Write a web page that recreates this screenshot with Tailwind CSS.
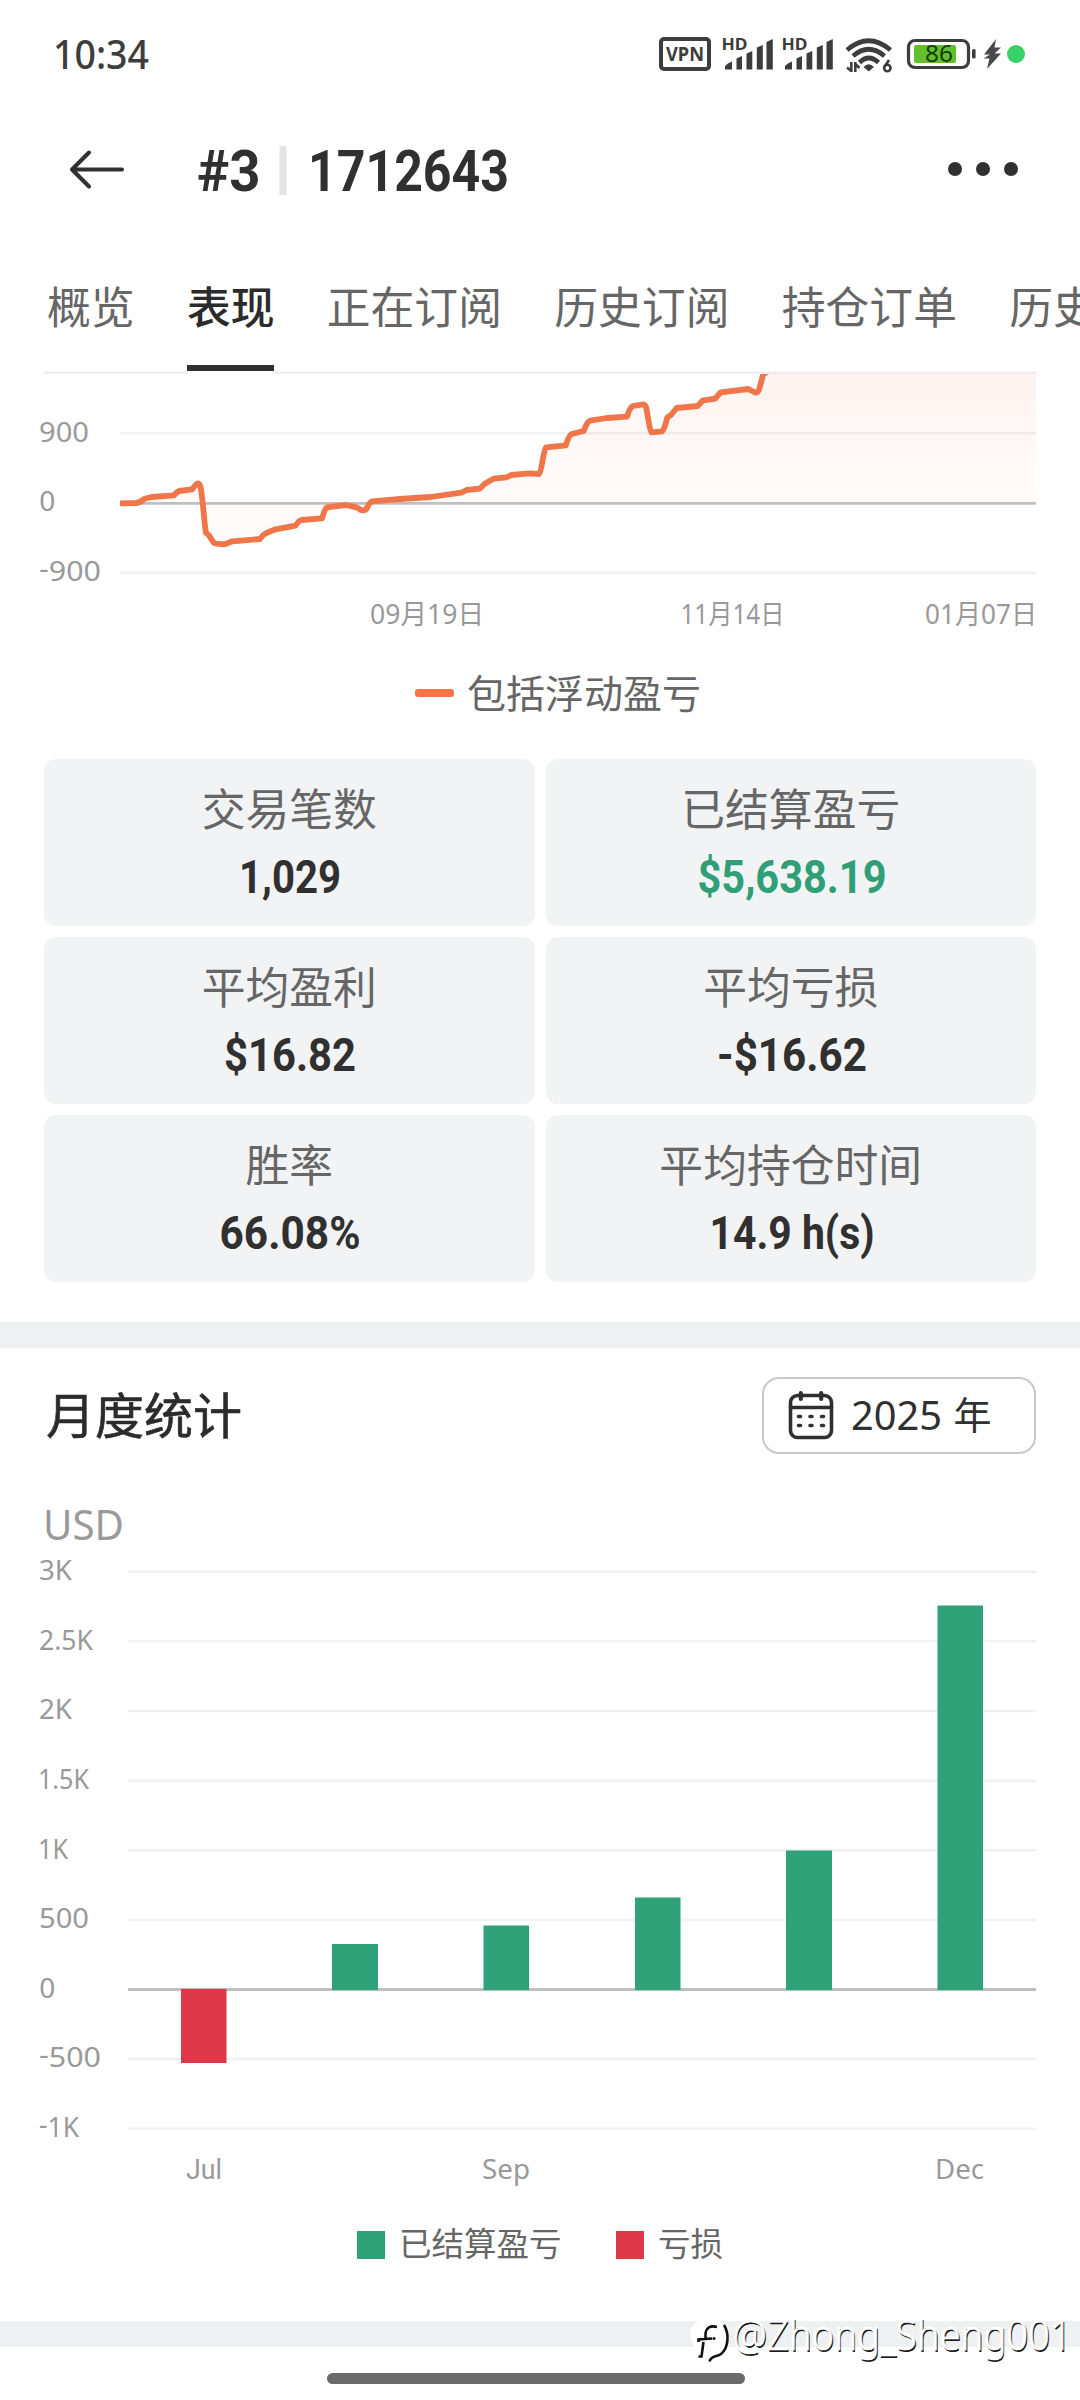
<!DOCTYPE html>
<html lang="zh-CN">
<head>
<meta charset="utf-8">
<title>#3 | 1712643</title>
<script src="https://cdn.jsdelivr.net/npm/@tailwindcss/browser@4"></script>
</head>
<body class="bg-white">
<div class="relative flex h-[2400px] w-[1080px] flex-col overflow-hidden bg-white font-['Noto_Sans','Noto_Sans_CJK_SC',sans-serif] text-[#2f2f2f] [&_svg]:overflow-visible">

  <!-- Status bar -->
  <header class="flex h-[108px] shrink-0 items-center justify-between pr-[55px] pl-[53px]">
    <svg class="h-[60px] w-[100px]" viewBox="0 -10 100 60"><text x="0" y="34.5" font-size="40" font-weight="500" fill="#3d3d3d" textLength="96" lengthAdjust="spacingAndGlyphs">10:34</text></svg>
    <div class="flex items-center text-[#3d3d3d]">
      <svg class="h-[36px] w-[54px]" viewBox="658 36 54 36"><rect x="661" y="39" width="48" height="30" rx="3" fill="none" stroke="currentColor" stroke-width="4"/><text x="666" y="60.5" font-size="19.5" font-weight="700" fill="currentColor" textLength="38" lengthAdjust="spacingAndGlyphs">VPN</text></svg>
      <svg class="ml-[10px] h-[36px] w-[52px]" viewBox="722 36 52 36" fill="currentColor"><text x="721.500" y="50" font-size="16" font-weight="700" textLength="26" lengthAdjust="spacingAndGlyphs">HD</text><path d="M725 69.500V66Q728 62.500 732 61.500V69.500ZM736.500 69.500V58.500L742 56V69.500ZM746.500 69.500V53.500L752.300 51V69.500ZM756.800 69.500V47.500L762.800 45V69.500ZM766.500 69.500V42L772.800 39V69.500Z"/></svg>
      <svg class="ml-[8px] h-[36px] w-[52px]" viewBox="722 36 52 36" fill="currentColor"><text x="721.500" y="50" font-size="16" font-weight="700" textLength="26" lengthAdjust="spacingAndGlyphs">HD</text><path d="M725 69.500V66Q728 62.500 732 61.500V69.500ZM736.500 69.500V58.500L742 56V69.500ZM746.500 69.500V53.500L752.300 51V69.500ZM756.800 69.500V47.500L762.800 45V69.500ZM766.500 69.500V42L772.800 39V69.500Z"/></svg>
      <svg class="ml-[10px] h-[38px] w-[50px]" viewBox="844 35 50 38" fill="none" stroke="currentColor" stroke-width="4.600"><path d="M847 50Q868.500 31.500 890.500 50M853 56Q868.500 42.500 884.500 56M859.500 62.500Q868.700 53.500 878.500 62.500"/><path d="M863.500 67Q868.700 61.500 874 67L868.700 71.500Z" fill="currentColor" stroke="none"/><path d="M851.300 62V72M855.300 72V62M847 67.500L851.300 71M855.300 64L859.500 68" stroke-width="2.600"/><circle cx="887.300" cy="68" r="3.200" stroke-width="2.600"/><path d="M889 60L884.700 66.500" stroke-width="2.600"/></svg>
      <svg class="ml-[12px] h-[32px] w-[70px]" viewBox="906 38 70 32"><rect x="908.500" y="40.500" width="60" height="27" rx="6.500" fill="none" stroke="#3d3d3d" stroke-width="3.200"/><rect x="914" y="45" width="42" height="18" rx="2" fill="#62c02c"/><rect x="972" y="49" width="3.600" height="9.500" rx="1.500" fill="#3d3d3d"/><text x="925" y="62.300" font-size="23.500" fill="#173c08" textLength="28" lengthAdjust="spacingAndGlyphs">86</text></svg>
      <svg class="ml-[6px] h-[32px] w-[20px]" viewBox="982 38 20 32" fill="#4a4a4a"><path d="M996 39L984 54.500H990L983.500 58.500H989.500L987 69L1001 53.500H994.500L1001 47.500H994.500Z"/></svg>
      <span class="ml-[5px] size-[18px] rounded-full bg-[#38d167]"></span>
    </div>
  </header>

  <!-- Title bar -->
  <div class="flex h-[124px] shrink-0 items-center pr-[62px] pl-[68px]">
    <svg class="h-[44px] w-[58px]" viewBox="68 147 58 44" fill="none" stroke="#303030" stroke-width="4" stroke-linecap="round" stroke-linejoin="round"><path d="M122 168.500H72M89 151.500L72 168.500L89 185.500"/></svg>
    <svg class="ml-[70px] h-[56px] w-[320px]" viewBox="196 142 320 56" font-family="Roboto" font-weight="700" fill="#303030"><text x="197" y="191" font-size="57.500" textLength="63.500" lengthAdjust="spacingAndGlyphs">#3</text><rect x="279.500" y="146" width="7" height="49" fill="#e4e4e4"/><text x="308" y="191" font-size="57.500" textLength="201" lengthAdjust="spacingAndGlyphs">1712643</text></svg>
    <div class="ml-auto flex -translate-y-px gap-[14px]"><i class="size-[14px] rounded-full bg-[#303030]"></i><i class="size-[14px] rounded-full bg-[#303030]"></i><i class="size-[14px] rounded-full bg-[#303030]"></i></div>
  </div>

  <!-- Tabs -->
  <nav class="flex h-[139px] shrink-0 gap-[52.300px] overflow-hidden pl-[47px] text-[43.800px] leading-[150px] whitespace-nowrap text-[#666]">
    <span>概览</span>
    <span class="relative font-medium text-[#2b2b2b]">表现<i class="absolute inset-x-0 bottom-0 h-[6px] bg-[#303030]"></i></span>
    <span>正在订阅</span><span>历史订阅</span><span>持仓订单</span><span>历史订单</span>
  </nav>

  <!-- Equity curve -->
  <svg class="h-[279px] w-[1080px] shrink-0" viewBox="0 371 1080 279" font-size="28" fill="#999">
    <defs>
      <linearGradient id="area" gradientUnits="userSpaceOnUse" x1="0" y1="374" x2="0" y2="503"><stop offset="0" stop-color="#fef4f1"/><stop offset="1" stop-color="#fffbfa"/></linearGradient>
      <clipPath id="plot"><rect x="119" y="374" width="918" height="230"/></clipPath>
    </defs>
    <g clip-path="url(#plot)">
      <path fill="url(#area)" d="M120 503.300L138.400 502.700 144.600 498.700 151.500 497 174 495.300 179 491 192 489.300 198 483.300 200.700 486.700 206 533 208.700 535 215.200 544.300 225.500 544 232.400 541.300 260 539 265.800 533.300 275.500 529.300 295.500 525.700 301.300 520 322 518.300 327 507.300 346 505 356.400 507.300 365 510.700 371.200 501.700 430.400 497 461.400 492.700 466.600 490 479.700 488.700 484.800 483.700 493.500 478.700 506.200 477.300 511.400 475 528.600 473.300 539 474 541.700 473 546.200 447.300 565.800 445.300 571.700 434 583.700 431 590 420.700 607 418 627 416.700 633 406 643.300 404.300 646 406.700 650.900 432.300 662.200 431.300 667.400 417.300 670.900 415 676.700 408 697.700 406 702.500 400.700 715 398.700 720.800 392.300 748.300 389 757.600 392.700 763.100 374.700 774 371H1036V503.300Z"/>
      <path d="M120 433.300H1036M120 572.700H1036" stroke="#000" stroke-opacity=".055" stroke-width="2.500"/>
      <path d="M120 503.300H1036" stroke="#bfbfbf" stroke-width="2.800"/>
      <path fill="none" stroke="#f0764a" stroke-width="5.800" stroke-linejoin="round" d="M120 503.300L136 503 Q140 502.500 144.600 498.700L151.500 497 174 495.300 Q176.500 492.500 179 491L192 489.300 196 484.500 Q199.500 481.500 200.700 487.500C203 500 204 522 206 533L208.700 535 213.500 542.500 Q215 544.500 225.500 544L232.400 541.300 260 539 Q263 534.500 265.800 533.300L275.500 529.300 295.500 525.700 Q299 520.500 301.300 520L322 518.300 Q325 508.500 327 507.300L346 505 356.400 507.300 361 510 Q365.500 511.500 367.500 507 Q369.500 502 372.500 501.300L400 499 430.400 497 461.400 492.700 466.600 490 479.700 488.700 484.800 483.700 493.500 478.700 506.200 477.300 511.400 475 528.600 473.300 539 474 C542 472 543 450 546.200 447.300L565.800 445.300 Q569 435 571.700 434L583.700 431 Q587 422 590 420.700L607 418 627 416.700 Q630 407 633 406L643.300 404.300 Q646 405 646.500 409C648 417 649.500 430 651.500 432.300L662.200 431.300 Q664.500 429 667.400 417.300L670.900 415 676.700 408 697.700 406 702.500 400.700 715 398.700 720.800 392.300 748.300 389 755 392.500 Q758 393.500 759.500 388L763.100 374.700 768 371"/>
    </g>
    <path d="M44 372.700H187M275 372.700H1036" stroke="#eee" stroke-width="2.500"/>
    <text x="39" y="442" textLength="50" lengthAdjust="spacingAndGlyphs">900</text>
    <text x="39.200" y="511">0</text>
    <text x="39" y="581" textLength="62" lengthAdjust="spacingAndGlyphs"><tspan dy="-3">-</tspan><tspan dy="3">900</tspan></text>
    <g font-size="27.500">
      <text x="370" y="623.500" textLength="114" lengthAdjust="spacingAndGlyphs">09月19日</text>
      <text x="680.500" y="623.500" textLength="104" lengthAdjust="spacingAndGlyphs">11月14日</text>
      <text x="925" y="623.500" textLength="112" lengthAdjust="spacingAndGlyphs">01月07日</text>
    </g>
  </svg>
  <div class="flex h-[86px] shrink-0 items-center pl-[415px]">
    <i class="h-[8px] w-[39px] rounded-[3px] bg-[#f57547]"></i>
    <span class="ml-[13px] -translate-y-[1.500px] text-[39px] leading-none text-[#666]">包括浮动盈亏</span>
  </div>

  <!-- Summary cards -->
  <section class="mt-[23px] grid shrink-0 grid-cols-2 gap-x-[11px] gap-y-[11.300px] px-[44px] text-[43.800px] leading-[60px] text-[#666]">
    <div class="flex h-[166.700px] flex-col items-center rounded-xl bg-[#f2f3f5] pt-[20px]"><span>交易笔数</span>
      <svg class="h-[56px] w-[240px]" viewBox="0 0 240 56"><text x="121" y="54" text-anchor="middle" font-family="Roboto" font-weight="700" font-size="46.500" fill="#303030" textLength="102" lengthAdjust="spacingAndGlyphs">1,029</text></svg></div>
    <div class="flex h-[166.700px] flex-col items-center rounded-xl bg-[#f2f3f5] pt-[20px]"><span>已结算盈亏</span>
      <svg class="h-[56px] w-[240px]" viewBox="0 0 240 56"><text x="121" y="54" text-anchor="middle" font-family="Roboto" font-weight="700" font-size="46.500" fill="#309f77" textLength="189" lengthAdjust="spacingAndGlyphs">$5,638.19</text></svg></div>
    <div class="flex h-[166.700px] flex-col items-center rounded-xl bg-[#f2f3f5] pt-[20px]"><span>平均盈利</span>
      <svg class="h-[56px] w-[240px]" viewBox="0 0 240 56"><text x="121" y="54" text-anchor="middle" font-family="Roboto" font-weight="700" font-size="46.500" fill="#303030" textLength="132" lengthAdjust="spacingAndGlyphs">$16.82</text></svg></div>
    <div class="flex h-[166.700px] flex-col items-center rounded-xl bg-[#f2f3f5] pt-[20px]"><span>平均亏损</span>
      <svg class="h-[56px] w-[240px]" viewBox="0 0 240 56"><text x="121" y="54" text-anchor="middle" font-family="Roboto" font-weight="700" font-size="46.500" fill="#303030" textLength="150" lengthAdjust="spacingAndGlyphs">-$16.62</text></svg></div>
    <div class="flex h-[166.700px] flex-col items-center rounded-xl bg-[#f2f3f5] pt-[20px]"><span>胜率</span>
      <svg class="h-[56px] w-[240px]" viewBox="0 0 240 56"><text x="121" y="54" text-anchor="middle" font-family="Roboto" font-weight="700" font-size="46.500" fill="#303030" textLength="141" lengthAdjust="spacingAndGlyphs">66.08%</text></svg></div>
    <div class="flex h-[166.700px] flex-col items-center rounded-xl bg-[#f2f3f5] pt-[20px]"><span>平均持仓时间</span>
      <svg class="h-[56px] w-[240px]" viewBox="0 0 240 56"><text x="121" y="54" text-anchor="middle" font-family="Roboto" font-weight="700" font-size="46.500" fill="#303030" textLength="165" lengthAdjust="spacingAndGlyphs">14.9 h(s)</text></svg></div>
  </section>

  <div class="mt-[40px] h-[26px] shrink-0 bg-[#eff0f2]"></div>

  <!-- Monthly statistics -->
  <div class="mt-[29px] flex h-[77px] shrink-0 items-center justify-between pr-[44px] pl-[46px]">
    <h2 class="text-[49px] leading-none font-normal text-[#2b2b2b] [-webkit-text-stroke:0.600px_#2b2b2b]">月度统计</h2>
    <button class="flex h-[77px] w-[274px] items-center rounded-[17px] border-2 border-[#c8c8c8] pl-[24px]">
      <svg class="h-[50px] w-[46px]" viewBox="788.500 1390 46 50" fill="none" stroke="#303030" stroke-width="3.600" stroke-linecap="round"><rect x="791" y="1395.500" width="41" height="42" rx="7"/><path d="M791 1407.500H832"/><path d="M801.300 1393V1399M821.700 1393V1399" stroke-width="4.200"/><path d="M799 1416.500H801M810.500 1416.500H812.500M822 1416.500H824M799 1425.500H801M810.500 1425.500H812.500M822 1425.500H824" stroke-width="3.600"/></svg>
      <svg class="ml-[15px] h-[50px] w-[150px]" viewBox="849 1390 150 50" fill="#303030"><text x="851" y="1430" font-size="40.500" textLength="91" lengthAdjust="spacingAndGlyphs">2025</text><text x="953.500" y="1429" font-size="38">年</text></svg>
    </button>
  </div>

  <svg class="h-[746px] w-[1080px] shrink-0" viewBox="0 1454 1080 746" font-size="28" fill="#999">
    <text x="43" y="1539.500" font-size="41" textLength="81" lengthAdjust="spacingAndGlyphs">USD</text>
    <path d="M128 1571.700H1036M128 1641.300H1036M128 1711H1036M128 1780.700H1036M128 1850.300H1036M128 1920H1036M128 2059H1036M128 2128.700H1036" stroke="#f1f1f1" stroke-width="2.500"/>
    <path d="M128 1989.500H1036" stroke="#bfbfbf" stroke-width="2.800"/>
    <path fill="#dc3848" d="M181 1989H226.500V2063H181Z"/>
    <path fill="#2fa279" d="M332 1944H378V1990H332ZM483.500 1925.500H529V1990H483.500ZM635 1897.500H680.500V1990H635ZM786 1850.500H832V1990H786ZM937.500 1605.500H983V1990H937.500Z"/>
    <text x="39" y="1580" textLength="33" lengthAdjust="spacingAndGlyphs">3K</text>
    <text x="39" y="1649.700" textLength="54" lengthAdjust="spacingAndGlyphs">2.5K</text>
    <text x="39" y="1719" textLength="33" lengthAdjust="spacingAndGlyphs">2K</text>
    <text x="38" y="1789" textLength="51" lengthAdjust="spacingAndGlyphs">1.5K</text>
    <text x="38" y="1858.500" textLength="30" lengthAdjust="spacingAndGlyphs">1K</text>
    <text x="39" y="1928.300" textLength="50" lengthAdjust="spacingAndGlyphs">500</text>
    <text x="39.200" y="1998">0</text>
    <text x="39" y="2067" textLength="62" lengthAdjust="spacingAndGlyphs"><tspan dy="-3">-</tspan><tspan dy="3">500</tspan></text>
    <text x="39" y="2137" textLength="40" lengthAdjust="spacingAndGlyphs"><tspan dy="-3">-</tspan><tspan dy="3">1K</tspan></text>
    <text x="204" y="2179" text-anchor="middle" font-family="Roboto" textLength="36" lengthAdjust="spacingAndGlyphs">Jul</text>
    <text x="506" y="2179" text-anchor="middle" textLength="48" lengthAdjust="spacingAndGlyphs">Sep</text>
    <text x="959.500" y="2179" text-anchor="middle" textLength="49" lengthAdjust="spacingAndGlyphs">Dec</text>
  </svg>
  <div class="flex h-[90px] shrink-0 items-center pl-[357px] text-[32.500px] leading-none text-[#666]">
    <i class="size-[28px] bg-[#2fa279]"></i><span class="ml-[14px] w-[217px]">已结算盈亏</span>
    <i class="size-[28px] bg-[#dc3848]"></i><span class="ml-[14px]">亏损</span>
  </div>

  <div class="mt-[31px] h-[26px] shrink-0 bg-[#eff0f2]"></div>
  <div class="mt-[26px] ml-[327px] h-[11px] w-[418px] shrink-0 rounded-full bg-[#6b6b6b]"></div>

  <!-- Watermark -->
  <svg class="absolute top-[2310px] left-[680px] h-[60px] w-[400px]" viewBox="680 2310 400 60">
    <path d="M690 2336C690 2325 696 2320 706 2320C721 2317 729 2328 727 2341C727 2351 721 2357 715 2357L709 2361L698 2357Z" fill="#fff"/>
    <path d="M717 2327C710 2325 706 2328 705.500 2334V2338.500M698.500 2342V2339.500L712 2338.500M703.500 2342L701.500 2356.500H698.500M724 2325C729.500 2334 728.500 2348 721 2354C717 2357 711 2355 709.500 2361.500" fill="none" stroke="#111" stroke-width="2.600"/>
    <circle cx="714" cy="2338.500" r="1.600" fill="#111"/>
    <text x="734" y="2351.500" font-size="41.500" font-weight="300" fill="#1a1a1a" textLength="339" lengthAdjust="spacingAndGlyphs">@Zhong_Sheng001</text>
    <text x="732.800" y="2350.400" font-size="41.500" font-weight="300" fill="#fff" stroke="#fff" stroke-width=".6" textLength="339" lengthAdjust="spacingAndGlyphs">@Zhong_Sheng001</text>
  </svg>
</div>
</body>
</html>
